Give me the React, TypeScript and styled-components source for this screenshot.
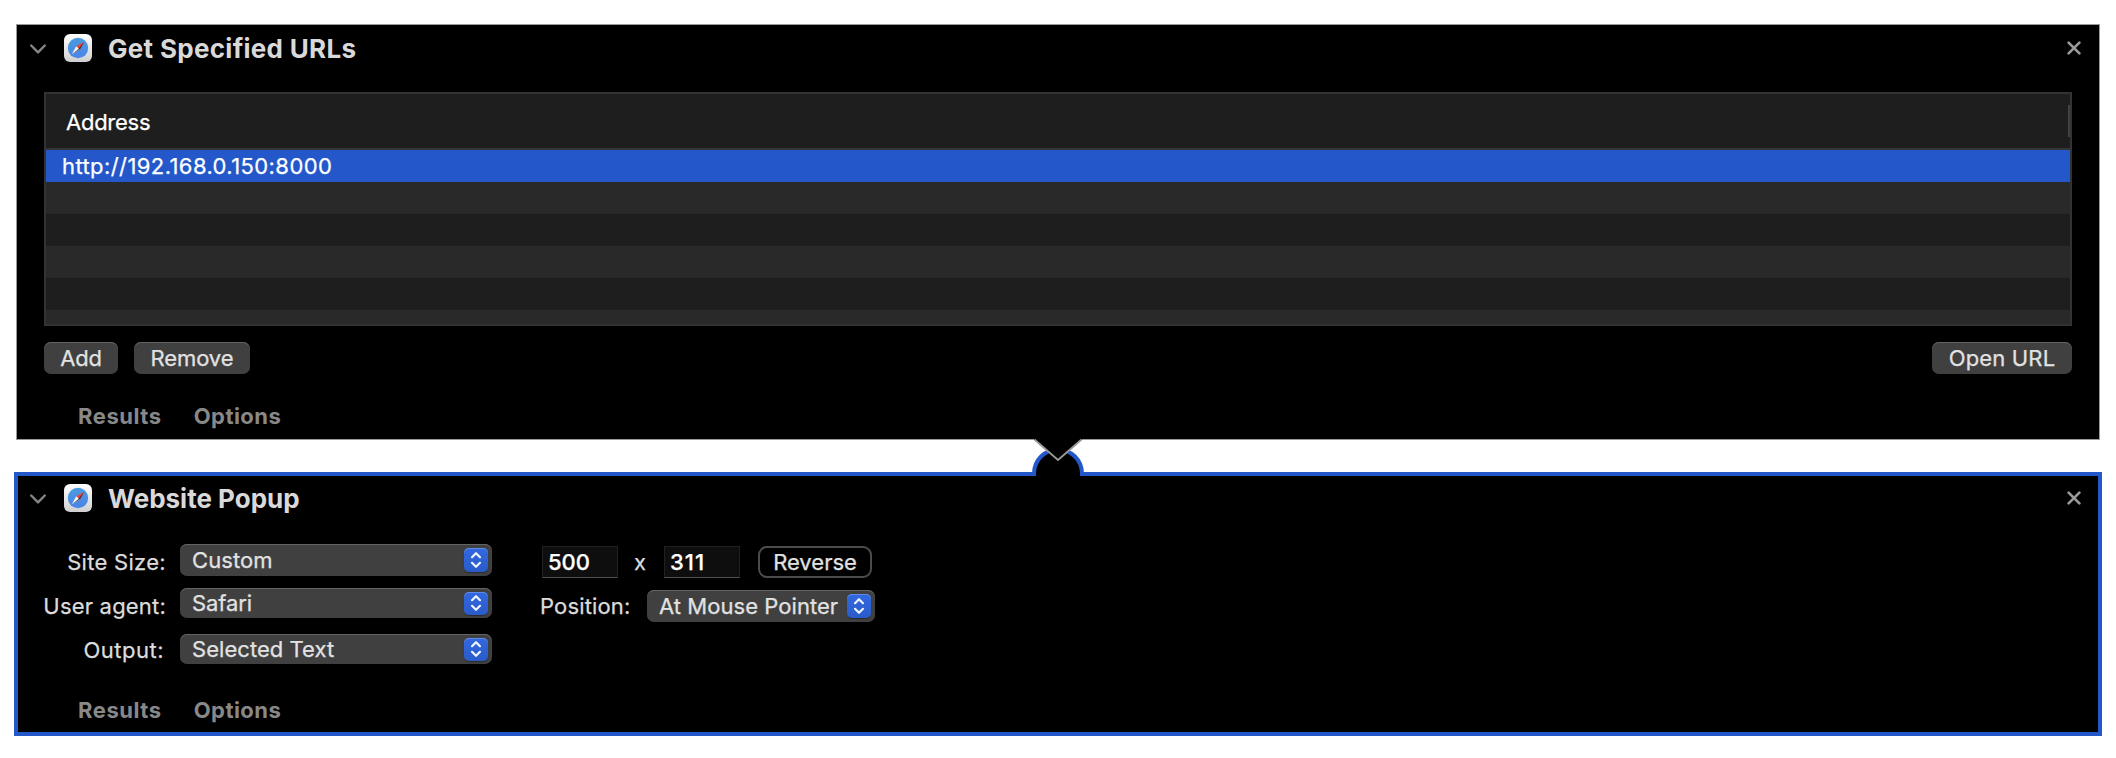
import React from "react";
import styled, { createGlobalStyle } from "styled-components";

const GlobalStyle = createGlobalStyle`
  * { box-sizing: border-box; }
  body {
    margin: 0;
    background: #fff;
    font-family: Inter, "Liberation Sans", sans-serif;
    font-size: 22px;
    color: #dcdcdc;
    -webkit-text-stroke: 0.25px currentColor;
  }
`;

const Workflow = styled.main`
  width: 2116px;
  height: 758px;
  padding: 24px 14px 22px;
`;

const Action = styled.section<{ $selected?: boolean }>`
  position: relative;
  display: flex;
  flex-direction: column;
  background: #000;
  height: ${(p) => (p.$selected ? 264 : 416)}px;
  margin: ${(p) => (p.$selected ? "32px 0 0" : "0 2px")};
  padding: ${(p) => (p.$selected ? 0 : "1px 1px 0")};
  border: ${(p) => (p.$selected ? "4px solid #2458ca" : "1px solid #999")};
`;

const Header = styled.header`
  display: flex;
  align-items: center;
  height: 44px;
  padding: 0 16px 0 12px;
`;

const Disclosure = styled.svg`
  display: block;
  width: 16px;
  height: 10px;
  margin-top: 2px;
`;

const AppIcon = styled.svg`
  display: block;
  width: 28px;
  height: 28px;
  margin: 0 16px 0 18px;
`;

const Title = styled.h2<{ $track: number }>`
  flex: 1;
  margin: 0;
  padding-top: 1px;
  font-size: 26px;
  line-height: 44px;
  font-weight: 700;
  letter-spacing: ${(p) => p.$track}px;
  color: #d9d9d9;
  -webkit-text-stroke: 0;
`;

const CloseIcon = styled.svg`
  display: block;
  width: 16px;
  height: 16px;
`;

const Label = styled.span<{ $track?: number }>`
  letter-spacing: ${(p) => p.$track ?? 0}px;
  white-space: pre;
`;

const Table = styled.div`
  height: 234px;
  margin: 22px 26px 0;
  border: 2px solid #333;
  background: #1e1e1e;
  color: #fff;
  overflow: hidden;
`;

const TableHead = styled.div`
  display: flex;
  align-items: center;
  justify-content: space-between;
  height: 56px;
  padding: 2px 0 0 20px;
  border-bottom: 2px solid #353535;
`;

const ColumnGrip = styled.span`
  width: 2px;
  height: 32px;
  margin-top: -2px;
  background: #424242;
`;

const TableRow = styled.div<{ $fill: string }>`
  height: 32px;
  padding-left: 16px;
  line-height: 32px;
  background: ${(p) => p.$fill};
`;

const ButtonBar = styled.div`
  display: flex;
  gap: 16px;
  margin: 16px 26px 0;
`;

const Spacer = styled.span`
  flex: 1;
`;

const Button = styled.button<{ $width: number; $outline?: boolean }>`
  width: ${(p) => p.$width}px;
  height: 32px;
  padding: 0;
  border: ${(p) => (p.$outline ? "2px solid #4c4c4c" : "0")};
  border-radius: ${(p) => (p.$outline ? 9 : 7)}px;
  background: ${(p) => (p.$outline ? "#000" : "#404040")};
  box-shadow: ${(p) => (p.$outline ? "none" : "inset 0 1px 0 #646464")};
  color: #e2e2e2;
  font: inherit;
  line-height: ${(p) => (p.$outline ? 28 : 32)}px;
`;

const Footer = styled.footer<{ $bottom: number }>`
  display: flex;
  gap: 32px;
  margin-top: auto;
  padding: 0 0 ${(p) => p.$bottom}px 60px;
  line-height: 28px;
  font-weight: 700;
  color: #888;
  -webkit-text-stroke: 0;
`;

const Form = styled.div`
  display: flex;
  padding: 20px 0 0 18px;
`;

const LabelColumn = styled.div`
  display: flex;
  flex-direction: column;
  align-items: flex-end;
  width: 130px;
  line-height: 44px;
`;

const OutputLabel = styled(Label)`
  padding-right: 2px;
`;

const SelectColumn = styled.div`
  display: flex;
  flex-direction: column;
  padding: 4px 0 0 14px;
`;

const Popup = styled.div<{ $width: number; $height: number; $gap?: number }>`
  display: flex;
  align-items: center;
  justify-content: space-between;
  width: ${(p) => p.$width}px;
  height: ${(p) => p.$height}px;
  margin-bottom: ${(p) => p.$gap ?? 0}px;
  padding: 0 4px 0 12px;
  border-radius: 7px;
  background: #404040;
  box-shadow: inset 0 1px 0 #646464;
  color: #e2e2e2;
  line-height: ${(p) => p.$height}px;
`;

const StepperBox = styled.span<{ $height: number }>`
  display: flex;
  align-items: center;
  justify-content: center;
  width: 24px;
  height: ${(p) => p.$height}px;
  border-radius: 5px;
  background: linear-gradient(#3268e0, #2a5bc9);
  box-shadow: inset 0 1px 0 #5f8be6, 0 1px 1px rgba(0, 0, 0, 0.35);
`;

const Details = styled.div`
  display: flex;
  flex-direction: column;
  gap: 12px;
  padding: 6px 0 0 48px;
`;

const DetailRow = styled.div`
  display: flex;
  align-items: center;
  height: 32px;
`;

const NumberField = styled.div<{ $track?: number }>`
  width: 76px;
  height: 32px;
  margin-left: 2px;
  padding-left: 5px;
  border: 1px solid #212121;
  border-bottom: 1px solid #505050;
  background: #0e0e0e;
  color: #fff;
  font-weight: 500;
  line-height: 31px;
  letter-spacing: ${(p) => p.$track ?? 0}px;
`;

const Times = styled.span`
  width: 44px;
  text-align: center;
  line-height: 32px;
`;

const ReverseButton = styled(Button)`
  margin-left: 18px;
`;

const PositionLabel = styled(Label)`
  width: 107px;
  line-height: 32px;
`;

const Connector = styled.svg`
  position: absolute;
  top: 413px;
  left: 1013px;
  width: 56px;
  height: 40px;
  z-index: 2;
`;

const Chevron = () => (
  <Disclosure viewBox="0 0 16 10">
    <path d="M1.2 1.5 8 8.4l6.8-6.9" fill="none" stroke="#858585" strokeWidth="2.4" strokeLinecap="round" strokeLinejoin="round" />
  </Disclosure>
);

const Safari = () => (
  <AppIcon viewBox="0 0 28 28">
    <defs>
      <linearGradient id="tile" x2="0" y2="1">
        <stop stopColor="#fff" />
        <stop offset="1" stopColor="#cfcfcf" />
      </linearGradient>
      <linearGradient id="dial" x2="0" y2="1">
        <stop stopColor="#4a9cde" />
        <stop offset="1" stopColor="#4a84e8" />
      </linearGradient>
    </defs>
    <rect width="28" height="28" rx="6" fill="url(#tile)" />
    <circle cx="14" cy="14" r="10.2" fill="url(#dial)" />
    <path d="M20.2 7.8 12.2 12.2 15.8 15.8Z" fill="#ee4438" />
    <path d="M7.8 20.2 12.2 12.2 15.8 15.8Z" fill="#f6f6f6" />
    <path d="M20.2 7.8 15.8 15.8 14.6 14.6Z" fill="#4a2a38" />
    <path d="M7.8 20.2 15.8 15.8 14.8 14.8Z" fill="#4a5468" />
  </AppIcon>
);

const Close = () => (
  <CloseIcon viewBox="0 0 16 16">
    <path d="M2.6 2.6 13.4 13.4M13.4 2.6 2.6 13.4" fill="none" stroke="#999" strokeWidth="2.7" strokeLinecap="round" />
  </CloseIcon>
);

const Stepper = ({ height = 24 }: { height?: number }) => (
  <StepperBox $height={height}>
    <svg width="12" height="18" viewBox="0 0 12 18">
      <path d="M2 6.2 6 2.2l4 4M2 11.8l4 4 4-4" fill="none" stroke="#eef3fd" strokeWidth="2.2" strokeLinecap="round" strokeLinejoin="round" />
    </svg>
  </StepperBox>
);

const ActionHeader = ({ title, track = 0 }: { title: string; track?: number }) => (
  <Header>
    <Chevron />
    <Safari />
    <Title $track={track}>{title}</Title>
    <Close />
  </Header>
);

const ActionFooter = ({ bottom }: { bottom: number }) => (
  <Footer $bottom={bottom}>
    <Label $track={0.55}>Results</Label>
    <Label $track={0.45}>Options</Label>
  </Footer>
);

const stripes = ["#292929", "#1e1e1e", "#292929", "#1e1e1e", "#292929"];

export default function App() {
  return (
    <>
      <GlobalStyle />
      <Workflow>
        <Action>
          <Connector viewBox="0 0 56 40">
            <path d="M4 37V35.5A24 24 0 0 1 52 35.5V37" fill="#000" stroke="#2458ca" strokeWidth="4" />
            <path d="M4 0V1.5L28 22.5 52 1.5V0Z" fill="#000" />
            <path d="M4.5 1.5 28 22 51.5 1.5" fill="none" stroke="#999" strokeWidth="1.8" />
            <path d="M6 35h44v5H6Z" fill="#000" />
          </Connector>
          <ActionHeader title="Get Specified URLs" track={0.3} />
          <Table>
            <TableHead>
              <Label $track={-0.25}>Address</Label>
              <ColumnGrip />
            </TableHead>
            <TableRow $fill="#2458ca">
              <Label $track={0.41}>http://192.168.0.150:8000</Label>
            </TableRow>
            {stripes.map((fill, i) => (
              <TableRow key={i} $fill={fill} />
            ))}
          </Table>
          <ButtonBar>
            <Button $width={74}><Label $track={-0.2}>Add</Label></Button>
            <Button $width={116}><Label $track={-0.1}>Remove</Label></Button>
            <Spacer />
            <Button $width={140}><Label $track={0.15}>Open URL</Label></Button>
          </ButtonBar>
          <ActionFooter bottom={9} />
        </Action>

        <Action $selected>
          <ActionHeader title="Website Popup" />
          <Form>
            <LabelColumn>
              <Label $track={0.3}>Site Size:</Label>
              <Label $track={0.2}>User agent:</Label>
              <OutputLabel $track={0.5}>Output:</OutputLabel>
            </LabelColumn>
            <SelectColumn>
              <Popup $width={312} $height={32} $gap={12}>
                <Label $track={0.1}>Custom</Label>
                <Stepper />
              </Popup>
              <Popup $width={312} $height={30} $gap={16}>
                <Label $track={-0.1}>Safari</Label>
                <Stepper height={23} />
              </Popup>
              <Popup $width={312} $height={30}>
                <Label $track={0.05}>Selected Text</Label>
                <Stepper height={23} />
              </Popup>
            </SelectColumn>
            <Details>
              <DetailRow>
                <NumberField>500</NumberField>
                <Times>x</Times>
                <NumberField $track={1}>311</NumberField>
                <ReverseButton $width={114} $outline>Reverse</ReverseButton>
              </DetailRow>
              <DetailRow>
                <PositionLabel $track={0.15}>Position:</PositionLabel>
                <Popup $width={228} $height={32}>
                  <Label $track={0.05}>At Mouse Pointer</Label>
                  <Stepper />
                </Popup>
              </DetailRow>
            </Details>
          </Form>
          <ActionFooter bottom={8} />
        </Action>
      </Workflow>
    </>
  );
}
